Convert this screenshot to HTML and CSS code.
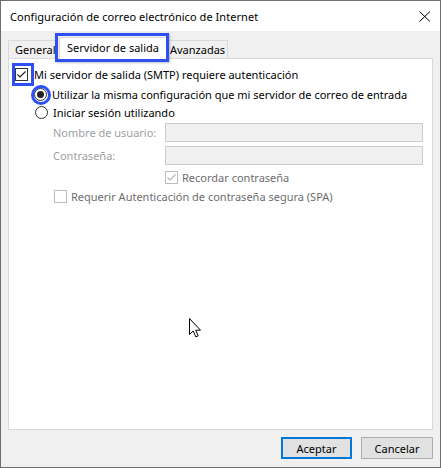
FILE: index.html
```html
<!DOCTYPE html>
<html lang="es">
<head>
<meta charset="utf-8">
<link rel="stylesheet" href="styles.css">
</head>
<body>
<div class="window">
  <div class="titlebar">
    <span class="title">Configuración de correo electrónico de Internet</span>
    <svg class="close" width="12" height="11" viewBox="0 0 12 11"><path d="M0.5 0.5 L11 10.5 M11 0.5 L0.5 10.5" stroke="#000" stroke-width="1" fill="none"/></svg>
  </div>
  <div class="body">
    <div class="tabs">
      <div class="tab t-general">General</div>
      <div class="tab selected">Servidor de salida</div>
      <div class="tab t-adv">Avanzadas</div>
    </div>
    <div class="panel">
      <div class="row r1">
        <span class="check on"><svg width="11" height="11" viewBox="0 0 11 11"><path d="M1.5 5.5 L4 8 L9.5 2.5" stroke="#222" stroke-width="1.2" fill="none"/></svg></span>
        <span class="lbl">Mi servidor de salida (SMTP) requiere autenticación</span>
      </div>
      <div class="row r2">
        <span class="radio on"></span>
        <span class="lbl">Utilizar la misma configuración que mi servidor de correo de entrada</span>
      </div>
      <div class="row r3">
        <span class="radio"></span>
        <span class="lbl">Iniciar sesión utilizando</span>
      </div>
      <div class="field f1">
        <span class="flabel">Nombre de usuario:</span>
        <span class="input"></span>
      </div>
      <div class="field f2">
        <span class="flabel">Contraseña:</span>
        <span class="input"></span>
      </div>
      <div class="row r4">
        <span class="check dis"><svg width="11" height="11" viewBox="0 0 11 11"><path d="M1.5 5.5 L4 8 L9.5 2.5" stroke="#b5b5b5" stroke-width="1.2" fill="none"/></svg></span>
        <span class="lbl dim">Recordar contraseña</span>
      </div>
      <div class="row r5">
        <span class="check dis"></span>
        <span class="lbl dim">Requerir Autenticación de contraseña segura (SPA)</span>
      </div>
    </div>
    <div class="footer">
      <button class="btn default">Aceptar</button>
      <button class="btn">Cancelar</button>
    </div>
  </div>
  <div class="mark mark-tab"></div>
  <div class="mark mark-check"></div>
  <div class="mark mark-radio"></div>
  <svg class="cursor" width="13" height="20" viewBox="0 0 13 20"><path d="M0.5 0.5 L0.5 16.5 L4.2 13 L6.8 18.8 L9.2 17.8 L6.7 12.2 L11.5 12.2 Z" fill="#fff" stroke="#000" stroke-width="1" stroke-linejoin="miter"/></svg>
</div>
</body>
</html>
```
FILE: styles.css
```css
* { box-sizing: border-box; }
html, body { margin: 0; padding: 0; }
body {
  font-family: "Noto Sans", "Open Sans", sans-serif;
  font-size: 11px;
  color: #000;
  background: #fff;
}
.window {
  position: relative;
  width: 441px;
  height: 468px;
  border: 1px solid #6e6e6e;
  background: #f0f0f0;
  display: flex;
  flex-direction: column;
  overflow: hidden;
}
.titlebar {
  height: 30px;
  background: #fff;
  display: flex;
  align-items: center;
  justify-content: space-between;
  padding: 0 9px 0 9px;
  flex: none;
}
.title { font-size: 11px; letter-spacing: 0.05px; }
.close { display: block; }
.body {
  flex: 1;
  display: flex;
  flex-direction: column;
  padding: 5px 7px 8px 7px;
}
.tabs {
  display: flex;
  align-items: flex-end;
  height: 22px;
  position: relative;
  z-index: 1;
}
.tab {
  height: 18px;
  line-height: 17px;
  border: 1px solid #d9d9d9;
  border-bottom: none;
  background: #f0f0f0;
  white-space: nowrap;
}
.t-general { width: 51px; padding-left: 6px; border-right: none; }
.t-adv { width: 61px; padding-left: 3px; border-left: none; }
.tab.selected {
  height: 22px;
  line-height: 19px;
  background: #fff;
  width: 108px;
  text-align: center;
  margin-bottom: -1px;
}
.panel {
  flex: 1;
  background: #fff;
  border: 1px solid #d9d9d9;
  padding: 6px 6px 0 6px;
  display: flex;
  flex-direction: column;
}
.row {
  display: flex;
  align-items: center;
  height: 18px;
}
.lbl { margin-left: 6px; white-space: nowrap; }
.dim { color: #6d6d6d; margin-left: 4px; }
.r2 { margin-top: 2px; padding-left: 19px; }
.r3 { margin-top: 0; padding-left: 20px; }
.r2 .lbl, .r3 .lbl { margin-left: 5px; }
.check {
  width: 13px;
  height: 13px;
  border: 1px solid #333;
  background: #fff;
  display: flex;
  align-items: center;
  justify-content: center;
  flex: none;
}
.check svg { display: block; }
.check.dis { border-color: #bcbcbc; }
.radio {
  width: 13px;
  height: 13px;
  border: 1px solid #333;
  border-radius: 50%;
  background: #fff;
  flex: none;
  display: flex;
  align-items: center;
  justify-content: center;
}
.radio.on::after {
  content: "";
  width: 7px;
  height: 7px;
  border-radius: 50%;
  background: #222;
}
.field {
  display: flex;
  align-items: center;
  padding-left: 38px;
  height: 19px;
}
.f1 { margin-top: 2px; }
.f2 { margin-top: 4px; }
.flabel { width: 112px; color: #a0a0a0; white-space: nowrap; }
.input {
  width: 258px;
  height: 19px;
  background: #f0f0f0;
  border: 1px solid #cccccc;
}
.r4 { margin-top: 3px; padding-left: 150px; height: 18px; }
.r5 { margin-top: 1px; padding-left: 39px; }
.footer {
  display: flex;
  justify-content: flex-end;
  gap: 9px;
  padding-top: 7px;
}
.btn {
  font-family: inherit;
  font-size: 11px;
  height: 22px;
  width: 72px;
  background: #e1e1e1;
  border: 1px solid #adadad;
  padding: 0;
  color: #000;
}
.btn.default { width: 71px; border: 2px solid #0078d7; }
.mark {
  position: absolute;
  border: 3px solid #2d50f5;
  pointer-events: none;
  z-index: 5;
}
.mark-tab { left: 54px; top: 32px; width: 114px; height: 29px; box-shadow: 1px 1px 2px rgba(0,0,0,0.25); }
.mark-check { left: 11px; top: 62px; width: 22px; height: 23px; }
.mark-radio { left: 30px; top: 84px; width: 20px; height: 20px; border-radius: 50%; }
.cursor { position: absolute; left: 188px; top: 317px; z-index: 6; }
```
